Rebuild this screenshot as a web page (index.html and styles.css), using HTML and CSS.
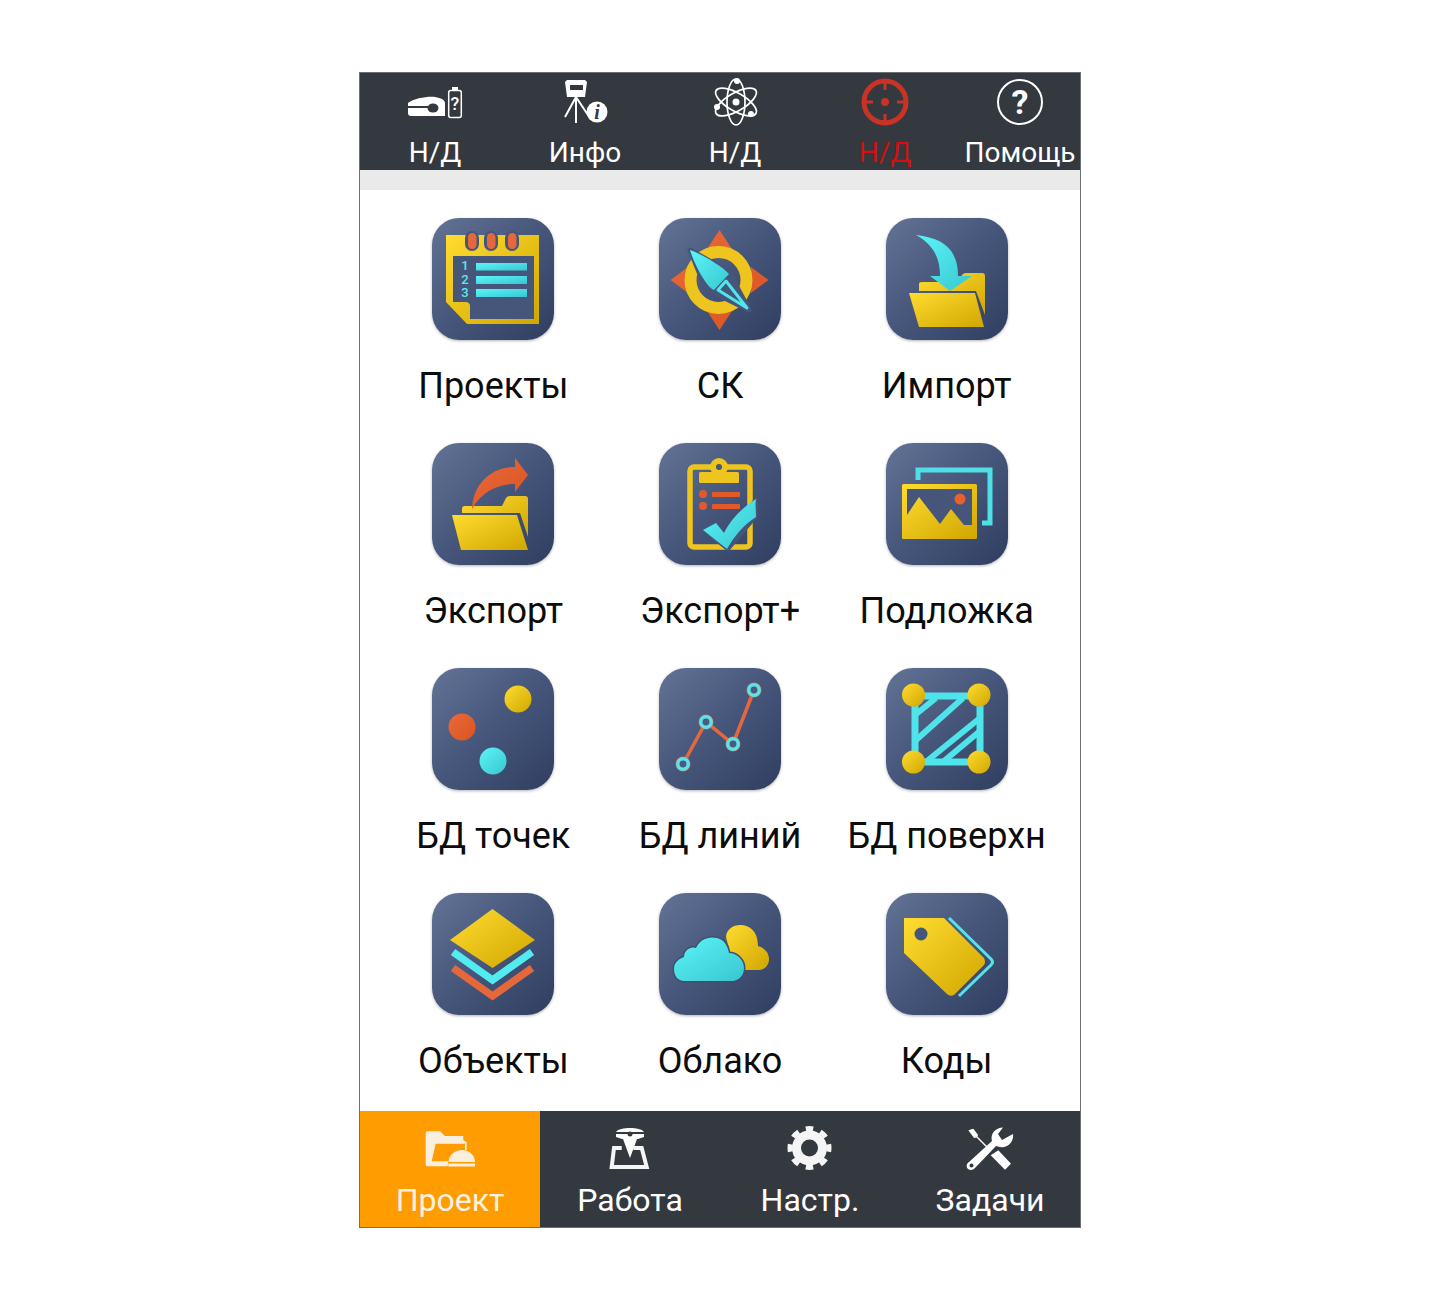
FILE: index.html
```html
<!DOCTYPE html>
<html lang="ru">
<head>
<meta charset="utf-8">
<title>Проект</title>
<link rel="stylesheet" href="styles.css">
</head>
<body>
<div class="phone">
  <header class="topbar">
    <div class="top-item">
      <svg class="top-icon" viewBox="0 0 60 50"><path class="w" d="M3 26 C9 21 24 19 30 20 C36 21 40 23 40 26 V39 H6 C4 39 3 38 3 36Z"/><rect class="d" x="3" y="29" width="20" height="2"/><ellipse class="d" cx="28" cy="31" rx="5.500" ry="4.500"/><rect class="w" x="47" y="10" width="6" height="3.500"/><rect class="ol" x="43.700" y="13.500" width="12.600" height="27" rx="2"/><text class="bat-q" x="50" y="33">?</text></svg>
      <span class="top-label">Н/Д</span>
    </div>
    <div class="top-item">
      <svg class="top-icon" viewBox="0 0 60 50"><path class="w" d="M12 3 H30 L32 5 L30 20 H12 L10 5Z"/><rect class="d" x="15" y="8" width="13" height="5"/><path class="ln" d="M21 20 L10 40 M21 20 V46 M21 20 L33 38"/><circle class="w" cx="42" cy="35" r="10.500"/><text class="info-i" x="42" y="42">i</text></svg>
      <span class="top-label">Инфо</span>
    </div>
    <div class="top-item">
      <svg class="top-icon" viewBox="0 0 60 50"><g class="orbit"><ellipse cx="31" cy="25" rx="23" ry="9" transform="rotate(30 31 25)"/><ellipse cx="31" cy="25" rx="23" ry="9" transform="rotate(90 31 25)"/><ellipse cx="31" cy="25" rx="23" ry="9" transform="rotate(150 31 25)"/></g><circle class="w" cx="31" cy="25" r="3.500"/><circle class="w" cx="32" cy="4" r="3"/><circle class="w" cx="12" cy="30" r="3"/><circle class="w" cx="46" cy="37" r="3"/></svg>
      <span class="top-label">Н/Д</span>
    </div>
    <div class="top-item">
      <svg class="top-icon" viewBox="0 0 60 50"><circle class="target" cx="30" cy="25" r="21"/><path class="target-t" d="M30 4 V13 M30 37 V46 M9 25 H18 M42 25 H51"/><circle class="target-d" cx="30" cy="25" r="4"/></svg>
      <span class="top-label alert">Н/Д</span>
    </div>
    <div class="top-item">
      <svg class="top-icon" viewBox="0 0 60 50"><circle class="help" cx="30" cy="25" r="22"/><text class="help-q" x="30" y="37">?</text></svg>
      <span class="top-label">Помощь</span>
    </div>
  </header>
  <div class="strip"></div>
  <main class="grid">
    <div class="cell">
      <div class="tile"><svg class="art" viewBox="0 0 122 122">
        <defs>
          <linearGradient id="y" x1="0" y1="0" x2="1" y2="1"><stop offset="0" stop-color="#ffdc30"/><stop offset="1" stop-color="#d0a600"/></linearGradient>
          <linearGradient id="c" x1="0" y1="0" x2="1" y2="1"><stop offset="0" stop-color="#5cf5f8"/><stop offset="1" stop-color="#38c6d0"/></linearGradient>
          <linearGradient id="o" x1="0" y1="0" x2="1" y2="1"><stop offset="0" stop-color="#ea6a3c"/><stop offset="1" stop-color="#d9531f"/></linearGradient>
        </defs>
        <path fill="url(#y)" d="M14 17 H107 V106 H35 L14 84Z"/>
        <path class="bg" d="M21 38 H102 V101 H38 V88 C38 85 36 84 33 84 H21Z"/>
        <g class="rings"><rect x="33" y="13" width="14" height="20" rx="7"/><rect x="52" y="13" width="14" height="20" rx="7"/><rect x="73" y="13" width="14" height="20" rx="7"/></g>
        <rect fill="#e4683b" x="36" y="15" width="8.500" height="16" rx="4.250"/><rect fill="#e4683b" x="55" y="15" width="8.500" height="16" rx="4.250"/><rect fill="#e4683b" x="76" y="15" width="8.500" height="16" rx="4.250"/>
        <rect fill="url(#c)" x="44" y="45" width="51" height="7.500"/><rect fill="url(#c)" x="44" y="58" width="51" height="8"/><rect fill="url(#c)" x="44" y="71" width="51" height="8"/>
        <text class="num" x="33" y="52">1</text><text class="num" x="33" y="66">2</text><text class="num" x="33" y="79">3</text>
      </svg></div>
      <span class="label">Проекты</span>
    </div>
    <div class="cell">
      <div class="tile"><svg class="art" viewBox="0 0 122 122">
        <path fill="url(#o)" d="M60.500 12 L73 31 H48Z M60.500 112 L73 93 H48Z M11.500 62 L29 49 V75Z M109.500 62 L92 49 V75Z"/>
        <circle class="ring" cx="59.500" cy="62" r="28"/>
        <path class="halo-n" d="M31 32 L70 54 L90 92 L47 71Z"/>
        <path fill="url(#c)" d="M31 32 C40 35 62 47 70 56 L55 72 C48 70 36 48 31 32Z"/>
        <path class="needle" d="M67 63 L88 90 L59 72Z"/>
      </svg></div>
      <span class="label">СК</span>
    </div>
    <div class="cell">
      <div class="tile"><svg class="art" viewBox="0 0 122 122">
        <path fill="url(#y)" d="M33 66 Q33 64 36 64 H72 L76 57 Q77 55 80 55 H96 Q99 55 99 58 V97 L90 73 H33Z"/>
        <path fill="url(#c)" d="M30 17 C58 20 72 32 72 58 H86 L64 73 L44 58 H54 C54 38 46 26 30 17Z"/>
        <path fill="url(#y)" d="M23 75 H89 L98 109 H33Z"/>
      </svg></div>
      <span class="label">Импорт</span>
    </div>

    <div class="cell">
      <div class="tile"><svg class="art" viewBox="0 0 122 122">
        <path fill="url(#y)" d="M30 66 Q30 63 33 63 H70 L74 55 Q75 53 78 53 H93 Q96 53 96 56 V94 L88 70 H30Z"/>
        <path fill="url(#o)" d="M40 66 C41 42 58 24 83 24 V15 L96 32 L83 49 V41 C66 41 50 48 40 66Z"/>
        <path fill="url(#y)" d="M20 72 H85 L96 107 H29Z"/>
      </svg></div>
      <span class="label">Экспорт</span>
    </div>
    <div class="cell">
      <div class="tile"><svg class="art" viewBox="0 0 122 122">
        <rect class="clip" x="31" y="24" width="60" height="80" rx="4"/>
        <circle fill="#eec51f" cx="60" cy="24" r="9"/>
        <rect fill="#eec51f" x="40" y="29" width="40" height="11" rx="1.500"/>
        <circle class="bg" cx="60" cy="24" r="3"/>
        <circle fill="#e4592a" cx="44" cy="51" r="4"/><circle fill="#e4592a" cx="44" cy="63" r="4"/>
        <rect fill="#e4592a" x="53" y="49" width="28" height="5" rx="1"/><rect fill="#e4592a" x="53" y="61" width="28" height="5" rx="1"/>
        <path class="halo" d="M44 87 L57 80 L65 92 L97 56 V74 L69 107 Z"/>
        <path fill="url(#c)" d="M44 87 L57 80 L65 90 C72 76 84 64 97 56 C96 62 97 68 97 74 C84 82 75 94 68 106Z"/>
      </svg></div>
      <span class="label">Экспорт+</span>
    </div>
    <div class="cell">
      <div class="tile"><svg class="art" viewBox="0 0 122 122">
        <path class="frame" d="M32 37 V27 H104 V80 H96"/>
        <rect fill="url(#y)" x="16" y="41" width="75" height="55" rx="1.500"/>
        <path class="bg" d="M21 46 H86 V82 H78 L65 66 L54 81 L33 54 L21 72Z"/>
        <circle fill="#e9602f" cx="74" cy="56" r="5.500"/>
      </svg></div>
      <span class="label">Подложка</span>
    </div>

    <div class="cell">
      <div class="tile"><svg class="art" viewBox="0 0 122 122">
        <circle fill="url(#y)" cx="86" cy="31" r="13.500"/>
        <circle fill="url(#o)" cx="30" cy="59" r="13.500"/>
        <circle fill="url(#c)" cx="61" cy="93" r="13.500"/>
      </svg></div>
      <span class="label">БД точек</span>
    </div>
    <div class="cell">
      <div class="tile"><svg class="art" viewBox="0 0 122 122">
        <path class="trace" d="M24 96 L47 54 L74 76 L95 22"/>
        <g class="node-o"><circle cx="24" cy="96" r="7.500"/><circle cx="47" cy="54" r="7.500"/><circle cx="74" cy="76" r="7.500"/><circle cx="95" cy="22" r="7.500"/></g>
        <g class="node"><circle cx="24" cy="96" r="5.200"/><circle cx="47" cy="54" r="5.200"/><circle cx="74" cy="76" r="5.200"/><circle cx="95" cy="22" r="5.200"/></g>
      </svg></div>
      <span class="label">БД линий</span>
    </div>
    <div class="cell">
      <div class="tile"><svg class="art" viewBox="0 0 122 122">
        <rect class="surf" x="29" y="28" width="65" height="66"/>
        <path class="hatch" d="M29 47 L50 30 M29 73 L77 30 M41 93 L94 50 M58 93 L94 63"/>
        <g fill="url(#y)"><circle cx="27.500" cy="27" r="11.500"/><circle cx="93" cy="27" r="11.500"/><circle cx="27.500" cy="94" r="11.500"/><circle cx="93" cy="94" r="11.500"/></g>
      </svg></div>
      <span class="label">БД поверхн</span>
    </div>

    <div class="cell">
      <div class="tile"><svg class="art" viewBox="0 0 122 122">
        <path class="chev-o" d="M21 75 L60.500 103 L100 75"/>
        <path class="chev-c" d="M21 59 L60.500 87 L100 59"/>
        <path fill="url(#y)" d="M60.500 16 L103 47 L60.500 75 L18 47Z"/>
      </svg></div>
      <span class="label">Объекты</span>
    </div>
    <div class="cell">
      <div class="tile"><svg class="art" viewBox="0 0 122 122">
        <path fill="url(#y)" d="M68 48 C64 38 74 31 83 32 C94 33 99 42 99 53 C106 55 110 60 110 66 C110 73 105 77 99 77 H76Z"/>
        <path class="cloud-h" d="M15 76 C15 69 20 66 25 64 C25 57 32 53 37 55 C41 46 50 43 58 45 C66 47 69 54 70 60 C78 60 85 67 85 75 C85 83 79 88 73 88 H25 C19 88 15 83 15 76Z"/>
        <path fill="url(#c)" d="M15 76 C15 69 20 66 25 64 C25 57 32 53 37 55 C41 46 50 43 58 45 C66 47 69 54 70 60 C78 60 85 67 85 75 C85 83 79 88 73 88 H25 C19 88 15 83 15 76Z"/>
      </svg></div>
      <span class="label">Облако</span>
    </div>
    <div class="cell">
      <div class="tile"><svg class="art" viewBox="0 0 122 122">
        <path class="tag-edge" d="M63 25 L105 66 Q108 69 105 72 L73 103"/>
        <path fill="url(#y)" d="M18 25 H58 L98 65 Q100 69 98 72 L68 102 Q64 104 61 101 L18 60Z"/>
        <ellipse class="bg" cx="35" cy="41" rx="6.500" ry="6.500"/>
      </svg></div>
      <span class="label">Коды</span>
    </div>
  </main>
  <nav class="tabs">
    <div class="tab active">
      <svg class="tab-icon" viewBox="0 0 60 44"><path class="cream" d="M7 5.300 H20 L25 10 H43.300 V14.300 L46.700 16 V24.300 H45 V17.700 H15.700 L11.700 35.300 H28.300 L27.700 40.300 H7 Q5.700 40.300 5.700 39 V6.600 Q5.700 5.300 7 5.300Z"/><path class="cream" d="M28.500 36 C28.500 29 35 24 42 24 C49 24 55 29 55 36Z"/><rect class="cream" x="28.300" y="37.500" width="26.700" height="3"/></svg>
      <span class="tab-label">Проект</span>
    </div>
    <div class="tab">
      <svg class="tab-icon" viewBox="0 0 60 44"><path class="w" d="M16 6 C18 3 24 2 30 2 C36 2 42 3 44 6Z M16 8 H44 V11 L38 13 H37 L30 32 L23 13 H22 L16 11Z"/><circle class="d" cx="30" cy="8" r="2.500"/><path class="work" d="M21.700 22 H14 L11.700 41 H46.700 L41.700 22 H33.300"/></svg>
      <span class="tab-label">Работа</span>
    </div>
    <div class="tab">
      <svg class="tab-icon" viewBox="0 0 60 44"><circle class="gear" cx="29.500" cy="22" r="13"/><circle class="teeth" cx="29.500" cy="22" r="19.500" pathLength="80"/></svg>
      <span class="tab-label">Настр.</span>
    </div>
    <div class="tab">
      <svg class="tab-icon" viewBox="0 0 60 44"><path class="w" d="M8.300 4.300 L13.300 2.700 L18 8.700 L17.500 10.500 L29 22 L28 23 L16.500 11.500 L14 12Z"/><path class="w" d="M38.300 24.300 L51 37.700 L45 43.700 L30.700 29.300Z"/><path class="w" d="M43 1.500 L38 8 L42 14 L53 8 C54 14 50 20 44 21 C41 21.500 38.500 21 36 20 L15 42 C13 44.500 9 44.500 7.500 42.500 C6 40.500 6.500 37.500 9 36 L32 15 C30 8 35 2 43 1.500Z"/><circle class="hole" cx="11.500" cy="39.500" r="2"/></svg>
      <span class="tab-label">Задачи</span>
    </div>
  </nav>
</div>
</body>
</html>
```
FILE: styles.css
```css
* { box-sizing: border-box; }
html, body { margin: 0; padding: 0; background: #fff; }
body { font-family: Roboto, "Noto Sans", sans-serif; }

.phone {
  width: 722px;
  height: 1156px;
  margin: 72px auto 0;
  border: 1px solid #6b6f73;
  display: flex;
  flex-direction: column;
  background: #fff;
}

.topbar {
  height: 97px;
  background: #33393e;
  display: grid;
  grid-template-columns: repeat(4, 150px) 1fr;
}
.top-item { display: flex; flex-direction: column; align-items: center; padding-top: 4px; }
.top-icon { width: 60px; height: 50px; display: block; }
.top-label { color: #fff; font-size: 28px; line-height: 34px; white-space: nowrap; margin-top: 9px; }
.top-label.alert { color: #d40f0f; }

.strip { height: 20px; background: #eaeaea; }

.grid {
  flex: 1;
  padding: 28px 20px 0;
  display: grid;
  grid-template-columns: repeat(3, 1fr);
  grid-template-rows: repeat(3, 225px) 1fr;
}
.cell { display: flex; flex-direction: column; align-items: center; }
.tile {
  width: 122px;
  height: 122px;
  border-radius: 27px;
  background: linear-gradient(135deg, #627396 0%, #46567a 50%, #2f3e60 100%);
  box-shadow: 0 1px 3px rgba(0, 0, 0, 0.3);
}
.art { width: 122px; height: 122px; display: block; }
.label { font-size: 36px; line-height: 48px; margin-top: 22px; color: #0c0c0c; white-space: nowrap; }

.tabs {
  height: 116px;
  background: #33393e;
  display: grid;
  grid-template-columns: repeat(4, 1fr);
}
.tab { display: flex; flex-direction: column; align-items: center; padding-top: 15px; }
.tab.active { background: #ff9c00; }
.tab-icon { width: 60px; height: 44px; display: block; }
.tab-label { color: #fff; font-size: 32px; line-height: 44px; margin-top: 8px; white-space: nowrap; }
.tab.active .tab-label { color: #fdf3e0; }

.w { fill: #fff; }
.d { fill: #33393e; }
.ol { fill: none; stroke: #fff; stroke-width: 1.5; }
.bat-q { fill: #fff; font-size: 18px; font-weight: 500; text-anchor: middle; font-family: Roboto, sans-serif; }
.ln { fill: none; stroke: #fff; stroke-width: 2; }
.info-i { fill: #33393e; font-size: 20px; font-weight: 700; font-style: italic; text-anchor: middle; font-family: "Liberation Serif", serif; }
.orbit ellipse { fill: none; stroke: #fff; stroke-width: 1.7; }
.target { fill: none; stroke: #c93326; stroke-width: 5; }
.target-t { fill: none; stroke: #c93326; stroke-width: 3; }
.target-d { fill: #c93326; }
.help { fill: none; stroke: #fff; stroke-width: 2; }
.help-q { fill: #fff; font-size: 34px; font-weight: 700; text-anchor: middle; font-family: Roboto, sans-serif; }

.bg { fill: #46567a; }
.rings rect { fill: #46567a; }
.num { fill: #62e6ea; font-size: 13px; font-weight: 500; text-anchor: middle; font-family: Roboto, sans-serif; }
.ring { fill: none; stroke: #eec41e; stroke-width: 12; }
.halo-n { fill: #46567a; stroke: #46567a; stroke-width: 5; stroke-linejoin: round; }
.needle { fill: #46567a; stroke: #4fe6ec; stroke-width: 3; stroke-linejoin: round; }
.clip { fill: none; stroke: #eec51f; stroke-width: 5.5; }
.halo { fill: #46567a; stroke: #46567a; stroke-width: 3; }
.frame { fill: none; stroke: #4fdfe6; stroke-width: 5; }
.trace { fill: none; stroke: #e4683b; stroke-width: 3.5; }
.node-o circle { fill: #d9694a; }
.node circle { fill: #4a5b7d; stroke: #5de2e8; stroke-width: 3.5; }
.surf { fill: none; stroke: #4fe3ea; stroke-width: 7; }
.hatch { fill: none; stroke: #4fe3ea; stroke-width: 6; }
.chev-c { fill: none; stroke: #52ebf0; stroke-width: 7.5; }
.chev-o { fill: none; stroke: #e5683b; stroke-width: 7.5; }
.cloud-h { fill: none; stroke: #414f70; stroke-width: 3; }
.tag-edge { fill: none; stroke: #52e4ea; stroke-width: 3; }

.cream { fill: #f8efdf; }
.work { fill: none; stroke: #f5f5f5; stroke-width: 4; }
.gear { fill: none; stroke: #f5f5f5; stroke-width: 9; }
.teeth { fill: none; stroke: #f5f5f5; stroke-width: 5; stroke-dasharray: 5 5; stroke-dashoffset: 2.5; }
.hole { fill: #33393e; }
```
